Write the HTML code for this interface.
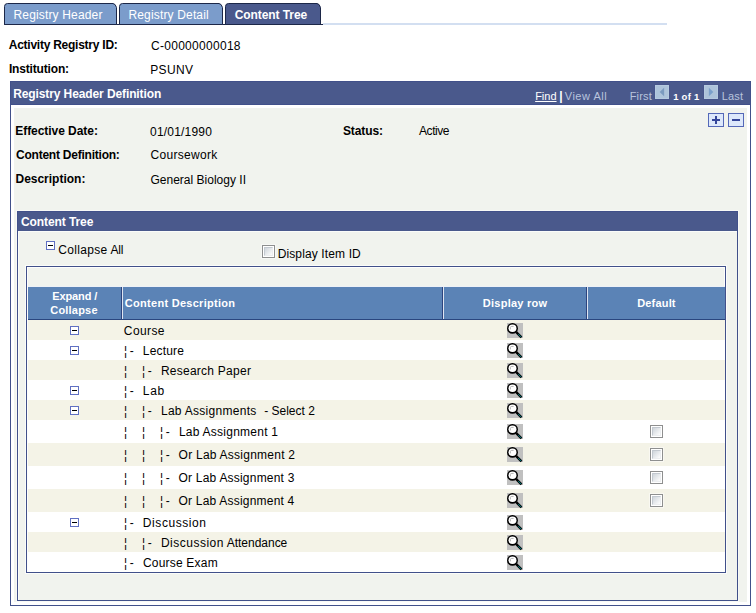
<!DOCTYPE html>
<html><head><meta charset="utf-8"><title>Content Tree</title>
<style>
html,body{margin:0;padding:0;background:#fff;}
body{width:756px;height:613px;position:relative;overflow:hidden;font-family:"Liberation Sans",sans-serif;font-size:12px;color:#000;}
.a{position:absolute;white-space:nowrap;}
.t{position:absolute;white-space:pre;line-height:14px;}
.b{font-weight:bold;}
.w{color:#fff;}
.s11{font-size:11px;line-height:13px;}
svg{position:absolute;display:block;overflow:visible;}
</style></head><body>
<div class="a" style="left:323px;top:23px;width:344px;height:2px;background:#d3dff1;"></div>
<div class="a" style="left:4px;top:24px;width:319px;height:1px;background:#1c2748;"></div>
<svg style="left:4px;top:3px" width="113" height="22" viewBox="0 0 113 22"><path d="M0.5 21.5 V3.5 Q0.5 0.5 3.5 0.5 H109 Q111.5 0.8 112.5 4.5 V21.5 Z" fill="#7b9ccb" stroke="#1c2748" stroke-width="1"/></svg>
<div class="t w" style="left:13.54px;top:8px;letter-spacing:0.154px;">Registry Header</div>
<svg style="left:119px;top:3px" width="104" height="22" viewBox="0 0 104 22"><path d="M0.5 21.5 V3.5 Q0.5 0.5 3.5 0.5 H100 Q102.5 0.8 103.5 4.5 V21.5 Z" fill="#7b9ccb" stroke="#1c2748" stroke-width="1"/></svg>
<div class="t w" style="left:128.44px;top:8px;letter-spacing:0.160px;">Registry Detail</div>
<svg style="left:225px;top:3px" width="96" height="22" viewBox="0 0 96 22"><path d="M0.5 21.5 V3.5 Q0.5 0.5 3.5 0.5 H92 Q94.5 0.8 95.5 4.5 V21.5 Z" fill="#4a598c" stroke="#1c2748" stroke-width="1"/></svg>
<div class="t b w" style="left:234.63px;top:8px;letter-spacing:-0.071px;">Content Tree</div>
<div class="t b" style="left:8.75px;top:38px;letter-spacing:-0.249px;">Activity Registry ID:</div>
<div class="t " style="left:150.97px;top:39px;letter-spacing:0.292px;">C-00000000018</div>
<div class="t b" style="left:8.88px;top:62px;letter-spacing:-0.163px;">Institution:</div>
<div class="t " style="left:150.24px;top:63px;letter-spacing:0.338px;">PSUNV</div>
<div class="a" style="left:10px;top:81px;width:741px;height:525px;background:#fff;box-sizing:border-box;border:1px solid #41508a;"></div>
<div class="a" style="left:14px;top:108px;width:733px;height:494px;background:#f1f3ee;"></div>
<div class="a" style="left:10px;top:81px;width:741px;height:24px;background:#4a598c;box-sizing:border-box;border:1px solid #41508a;"></div>
<div class="t b w" style="left:13.23px;top:87px;letter-spacing:-0.106px;">Registry Header Definition</div>
<div class="t w s11" style="left:535.15px;top:90px;letter-spacing:0.001px;"><span style="text-decoration:underline">Find</span></div>
<div class="t b w" style="left:559.25px;top:89px;">|</div>
<div class="t s11" style="left:564.72px;top:90px;letter-spacing:0.531px;color:#b9c4dd;">View All</div>
<div class="t s11" style="left:629.65px;top:90px;letter-spacing:0.182px;color:#b9c4dd;">First</div>
<div class="t b w" style="left:673.19px;top:91px;letter-spacing:0.242px;font-size:9.5px;line-height:11px;">1 of 1</div>
<div class="t s11" style="left:721.73px;top:90px;letter-spacing:0.157px;color:#b9c4dd;">Last</div>
<svg style="left:655px;top:85px" width="14" height="14" viewBox="0 0 14 14"><rect x="-0.5" y="-0.5" width="15" height="15" fill="none" stroke="#46548b" stroke-opacity="0.6" stroke-width="1"/><rect width="14" height="14" fill="#b5c9df"/><rect x="1" y="1" width="12" height="12" fill="#adc3da"/><path d="M9.1 2.8 L4.7 7 L9.1 11.2 Z" fill="#7b9abf"/></svg>
<svg style="left:704px;top:85px" width="14" height="14" viewBox="0 0 14 14"><rect x="-0.5" y="-0.5" width="15" height="15" fill="none" stroke="#46548b" stroke-opacity="0.6" stroke-width="1"/><rect width="14" height="14" fill="#b5c9df"/><rect x="1" y="1" width="12" height="12" fill="#adc3da"/><path d="M4.9 2.8 L9.3 7 L4.9 11.2 Z" fill="#7ba0cb"/></svg>
<svg style="left:708px;top:113px" width="16" height="14" viewBox="0 0 16 14"><rect x="0.5" y="0.5" width="15" height="13" fill="#dde8fb" stroke="#5468b8"/><path d="M4 7H12" stroke="#34459a" stroke-width="2"/><path d="M8 3V11" stroke="#34459a" stroke-width="2"/></svg>
<svg style="left:728px;top:113px" width="16" height="14" viewBox="0 0 16 14"><rect x="0.5" y="0.5" width="15" height="13" fill="#dde8fb" stroke="#5468b8"/><path d="M4 7H12" stroke="#34459a" stroke-width="2"/></svg>
<div class="t b" style="left:15.28px;top:124px;letter-spacing:-0.050px;">Effective Date:</div>
<div class="t " style="left:150.03px;top:125px;letter-spacing:0.202px;">01/01/1990</div>
<div class="t b" style="left:342.94px;top:124px;letter-spacing:-0.095px;">Status:</div>
<div class="t " style="left:419.04px;top:124px;letter-spacing:-0.433px;">Active</div>
<div class="t b" style="left:16.03px;top:148px;letter-spacing:-0.231px;">Content Definition:</div>
<div class="t " style="left:150.47px;top:148px;letter-spacing:0.299px;">Coursework</div>
<div class="t b" style="left:15.48px;top:172px;letter-spacing:-0.009px;">Description:</div>
<div class="t " style="left:150.47px;top:173px;letter-spacing:0.010px;">General Biology II</div>
<div class="a" style="left:16px;top:210px;width:723px;height:392px;background:transparent;box-sizing:border-box;border:1px solid #f8f9f6;"></div>
<div class="a" style="left:17px;top:211px;width:721px;height:390px;background:transparent;box-sizing:border-box;border:1px solid #41508a;"></div>
<div class="a" style="left:18px;top:212px;width:719px;height:388px;background:transparent;box-sizing:border-box;border-left:1px solid #fbfcfa;"></div>
<div class="a" style="left:18px;top:231px;width:719px;height:1px;background:#fbfcfa;"></div>
<div class="a" style="left:17px;top:211px;width:721px;height:20px;background:#4a598c;box-sizing:border-box;border:1px solid #41508a;border-bottom:none;"></div>
<div class="t b w" style="left:20.93px;top:215px;letter-spacing:-0.080px;">Content Tree</div>
<svg style="left:46px;top:241px" width="9" height="9" viewBox="0 0 9 9"><rect x="0.5" y="0.5" width="8" height="8" fill="#fff" stroke="#6070c2"/><path d="M2 4.5H7" stroke="#000"/></svg>
<div class="t " style="left:58.27px;top:243px;letter-spacing:0.315px;">Collapse</div>
<div class="t " style="left:110.44px;top:243px;letter-spacing:-0.181px;">All</div>
<div class="a" style="left:262px;top:245px;width:13px;height:13px;box-sizing:border-box;border:1px solid #8e8f8f;background:#fff;box-shadow:0 0 0 1px rgba(255,255,255,0.45);"><div style="position:absolute;left:1px;top:1px;width:9px;height:9px;box-sizing:border-box;border:1px solid;border-color:#c3c9d0 #eceef0 #eceef0 #c3c9d0;background:linear-gradient(135deg,#cfd5db 0%,#e6e9ec 50%,#fdfdfd 100%);"></div></div>
<div class="t " style="left:277.64px;top:247px;letter-spacing:0.127px;">Display Item ID</div>
<div class="a" style="left:25px;top:265px;width:702px;height:309px;background:transparent;box-sizing:border-box;border:1px solid #fbfcfa;"></div>
<div class="a" style="left:26px;top:266px;width:700px;height:307px;background:#f1f3ee;box-sizing:border-box;border:1px solid #41508a;"></div>
<div class="a" style="left:27px;top:267px;width:698px;height:305px;background:transparent;box-sizing:border-box;border:1px solid #fdfdfc;"></div>
<div class="a" style="left:28px;top:286px;width:697px;height:1px;background:#eef1f7;"></div>
<div class="a" style="left:28px;top:287px;width:697px;height:32px;background:#5b83b6;"></div>
<div class="a" style="left:28px;top:319px;width:697px;height:1px;background:#2a467f;"></div>
<div class="a" style="left:121px;top:287px;width:1px;height:32px;background:#2c447e;"></div>
<div class="a" style="left:122px;top:287px;width:1px;height:32px;background:#dfe5f1;"></div>
<div class="a" style="left:442px;top:287px;width:1px;height:32px;background:#2c447e;"></div>
<div class="a" style="left:443px;top:287px;width:1px;height:32px;background:#dfe5f1;"></div>
<div class="a" style="left:586px;top:287px;width:1px;height:32px;background:#2c447e;"></div>
<div class="a" style="left:587px;top:287px;width:1px;height:32px;background:#dfe5f1;"></div>
<div class="t b w s11" style="left:52.13px;top:289px;letter-spacing:-0.081px;line-height:14px;">Expand /</div>
<div class="t b w s11" style="left:50.25px;top:303px;letter-spacing:0.200px;line-height:14px;">Collapse</div>
<div class="t b w s11" style="left:124.85px;top:297px;letter-spacing:0.280px;">Content Description</div>
<div class="t b w s11" style="left:482.83px;top:297px;letter-spacing:0.240px;">Display row</div>
<div class="t b w s11" style="left:637.23px;top:297px;letter-spacing:0.169px;">Default</div>
<div class="a" style="left:28px;top:320px;width:697px;height:20px;background:#f4f3e7;"></div>
<svg style="left:70px;top:326px" width="9" height="9" viewBox="0 0 9 9"><rect x="0.5" y="0.5" width="8" height="8" fill="#fff" stroke="#6070c2"/><path d="M2 4.5H7" stroke="#000"/></svg>
<div class="t " style="left:123.87px;top:324px;letter-spacing:0.381px;">Course</div>
<svg style="left:507px;top:323px" width="16" height="15" viewBox="0 0 16 15"><rect width="16" height="15" fill="#c0c0c0"/><circle cx="5.5" cy="5.4" r="5.45" fill="#000"/><ellipse cx="5.5" cy="5.15" rx="3.95" ry="3.75" fill="#fff"/><path d="M3.4 6.4 V4.6 Q3.4 3.4 4.8 3.4 H6.6" fill="none" stroke="#b4b4b4" stroke-width="1"/><path d="M9.2 9.2 L14.5 14.3" stroke="#000" stroke-width="2.4"/><path d="M11.2 11.1 L14.3 14.1" stroke="#00868a" stroke-width="1.1" stroke-dasharray="0.9 0.6"/></svg>
<div class="a" style="left:28px;top:340px;width:697px;height:20px;background:#fff;"></div>
<svg style="left:70px;top:346px" width="9" height="9" viewBox="0 0 9 9"><rect x="0.5" y="0.5" width="8" height="8" fill="#fff" stroke="#6070c2"/><path d="M2 4.5H7" stroke="#000"/></svg>
<div class="t " style="left:124px;top:344px;">¦</div>
<div class="t " style="left:129.7px;top:344px;">-</div>
<div class="t " style="left:142.85px;top:344px;letter-spacing:0.171px;">Lecture</div>
<svg style="left:507px;top:343px" width="16" height="15" viewBox="0 0 16 15"><rect width="16" height="15" fill="#c0c0c0"/><circle cx="5.5" cy="5.4" r="5.45" fill="#000"/><ellipse cx="5.5" cy="5.15" rx="3.95" ry="3.75" fill="#fff"/><path d="M3.4 6.4 V4.6 Q3.4 3.4 4.8 3.4 H6.6" fill="none" stroke="#b4b4b4" stroke-width="1"/><path d="M9.2 9.2 L14.5 14.3" stroke="#000" stroke-width="2.4"/><path d="M11.2 11.1 L14.3 14.1" stroke="#00868a" stroke-width="1.1" stroke-dasharray="0.9 0.6"/></svg>
<div class="a" style="left:28px;top:360px;width:697px;height:20px;background:#f4f3e7;"></div>
<div class="t " style="left:124px;top:364px;">¦</div>
<div class="t " style="left:142px;top:364px;">¦</div>
<div class="t " style="left:147.7px;top:364px;">-</div>
<div class="t " style="left:160.95px;top:364px;letter-spacing:0.248px;">Research Paper</div>
<svg style="left:507px;top:363px" width="16" height="15" viewBox="0 0 16 15"><rect width="16" height="15" fill="#c0c0c0"/><circle cx="5.5" cy="5.4" r="5.45" fill="#000"/><ellipse cx="5.5" cy="5.15" rx="3.95" ry="3.75" fill="#fff"/><path d="M3.4 6.4 V4.6 Q3.4 3.4 4.8 3.4 H6.6" fill="none" stroke="#b4b4b4" stroke-width="1"/><path d="M9.2 9.2 L14.5 14.3" stroke="#000" stroke-width="2.4"/><path d="M11.2 11.1 L14.3 14.1" stroke="#00868a" stroke-width="1.1" stroke-dasharray="0.9 0.6"/></svg>
<div class="a" style="left:28px;top:380px;width:697px;height:20px;background:#fff;"></div>
<svg style="left:70px;top:386px" width="9" height="9" viewBox="0 0 9 9"><rect x="0.5" y="0.5" width="8" height="8" fill="#fff" stroke="#6070c2"/><path d="M2 4.5H7" stroke="#000"/></svg>
<div class="t " style="left:124px;top:384px;">¦</div>
<div class="t " style="left:129.7px;top:384px;">-</div>
<div class="t " style="left:142.85px;top:384px;letter-spacing:0.678px;">Lab</div>
<svg style="left:507px;top:383px" width="16" height="15" viewBox="0 0 16 15"><rect width="16" height="15" fill="#c0c0c0"/><circle cx="5.5" cy="5.4" r="5.45" fill="#000"/><ellipse cx="5.5" cy="5.15" rx="3.95" ry="3.75" fill="#fff"/><path d="M3.4 6.4 V4.6 Q3.4 3.4 4.8 3.4 H6.6" fill="none" stroke="#b4b4b4" stroke-width="1"/><path d="M9.2 9.2 L14.5 14.3" stroke="#000" stroke-width="2.4"/><path d="M11.2 11.1 L14.3 14.1" stroke="#00868a" stroke-width="1.1" stroke-dasharray="0.9 0.6"/></svg>
<div class="a" style="left:28px;top:400px;width:697px;height:20px;background:#f4f3e7;"></div>
<svg style="left:70px;top:406px" width="9" height="9" viewBox="0 0 9 9"><rect x="0.5" y="0.5" width="8" height="8" fill="#fff" stroke="#6070c2"/><path d="M2 4.5H7" stroke="#000"/></svg>
<div class="t " style="left:124px;top:404px;">¦</div>
<div class="t " style="left:142px;top:404px;">¦</div>
<div class="t " style="left:147.7px;top:404px;">-</div>
<div class="t " style="left:160.95px;top:404px;letter-spacing:0.283px;">Lab Assignments</div>
<div class="t " style="left:264.2px;top:404px;letter-spacing:0.002px;">- Select 2</div>
<svg style="left:507px;top:403px" width="16" height="15" viewBox="0 0 16 15"><rect width="16" height="15" fill="#c0c0c0"/><circle cx="5.5" cy="5.4" r="5.45" fill="#000"/><ellipse cx="5.5" cy="5.15" rx="3.95" ry="3.75" fill="#fff"/><path d="M3.4 6.4 V4.6 Q3.4 3.4 4.8 3.4 H6.6" fill="none" stroke="#b4b4b4" stroke-width="1"/><path d="M9.2 9.2 L14.5 14.3" stroke="#000" stroke-width="2.4"/><path d="M11.2 11.1 L14.3 14.1" stroke="#00868a" stroke-width="1.1" stroke-dasharray="0.9 0.6"/></svg>
<div class="a" style="left:28px;top:420px;width:697px;height:23px;background:#fff;"></div>
<div class="t " style="left:124px;top:425px;">¦</div>
<div class="t " style="left:142px;top:425px;">¦</div>
<div class="t " style="left:160px;top:425px;">¦</div>
<div class="t " style="left:165.7px;top:425px;">-</div>
<div class="t " style="left:178.95px;top:425px;letter-spacing:0.242px;">Lab Assignment 1</div>
<svg style="left:507px;top:424px" width="16" height="15" viewBox="0 0 16 15"><rect width="16" height="15" fill="#c0c0c0"/><circle cx="5.5" cy="5.4" r="5.45" fill="#000"/><ellipse cx="5.5" cy="5.15" rx="3.95" ry="3.75" fill="#fff"/><path d="M3.4 6.4 V4.6 Q3.4 3.4 4.8 3.4 H6.6" fill="none" stroke="#b4b4b4" stroke-width="1"/><path d="M9.2 9.2 L14.5 14.3" stroke="#000" stroke-width="2.4"/><path d="M11.2 11.1 L14.3 14.1" stroke="#00868a" stroke-width="1.1" stroke-dasharray="0.9 0.6"/></svg>
<div class="a" style="left:650px;top:425px;width:13px;height:13px;box-sizing:border-box;border:1px solid #8e8f8f;background:#fff;box-shadow:0 0 0 1px rgba(255,255,255,0.45);"><div style="position:absolute;left:1px;top:1px;width:9px;height:9px;box-sizing:border-box;border:1px solid;border-color:#c3c9d0 #eceef0 #eceef0 #c3c9d0;background:linear-gradient(135deg,#cfd5db 0%,#e6e9ec 50%,#fdfdfd 100%);"></div></div>
<div class="a" style="left:28px;top:443px;width:697px;height:23px;background:#f4f3e7;"></div>
<div class="t " style="left:124px;top:448px;">¦</div>
<div class="t " style="left:142px;top:448px;">¦</div>
<div class="t " style="left:160px;top:448px;">¦</div>
<div class="t " style="left:165.7px;top:448px;">-</div>
<div class="t " style="left:178.58px;top:448px;letter-spacing:0.241px;">Or Lab Assignment 2</div>
<svg style="left:507px;top:447px" width="16" height="15" viewBox="0 0 16 15"><rect width="16" height="15" fill="#c0c0c0"/><circle cx="5.5" cy="5.4" r="5.45" fill="#000"/><ellipse cx="5.5" cy="5.15" rx="3.95" ry="3.75" fill="#fff"/><path d="M3.4 6.4 V4.6 Q3.4 3.4 4.8 3.4 H6.6" fill="none" stroke="#b4b4b4" stroke-width="1"/><path d="M9.2 9.2 L14.5 14.3" stroke="#000" stroke-width="2.4"/><path d="M11.2 11.1 L14.3 14.1" stroke="#00868a" stroke-width="1.1" stroke-dasharray="0.9 0.6"/></svg>
<div class="a" style="left:650px;top:448px;width:13px;height:13px;box-sizing:border-box;border:1px solid #8e8f8f;background:#fff;box-shadow:0 0 0 1px rgba(255,255,255,0.45);"><div style="position:absolute;left:1px;top:1px;width:9px;height:9px;box-sizing:border-box;border:1px solid;border-color:#c3c9d0 #eceef0 #eceef0 #c3c9d0;background:linear-gradient(135deg,#cfd5db 0%,#e6e9ec 50%,#fdfdfd 100%);"></div></div>
<div class="a" style="left:28px;top:466px;width:697px;height:23px;background:#fff;"></div>
<div class="t " style="left:124px;top:471px;">¦</div>
<div class="t " style="left:142px;top:471px;">¦</div>
<div class="t " style="left:160px;top:471px;">¦</div>
<div class="t " style="left:165.7px;top:471px;">-</div>
<div class="t " style="left:178.58px;top:471px;letter-spacing:0.206px;">Or Lab Assignment 3</div>
<svg style="left:507px;top:470px" width="16" height="15" viewBox="0 0 16 15"><rect width="16" height="15" fill="#c0c0c0"/><circle cx="5.5" cy="5.4" r="5.45" fill="#000"/><ellipse cx="5.5" cy="5.15" rx="3.95" ry="3.75" fill="#fff"/><path d="M3.4 6.4 V4.6 Q3.4 3.4 4.8 3.4 H6.6" fill="none" stroke="#b4b4b4" stroke-width="1"/><path d="M9.2 9.2 L14.5 14.3" stroke="#000" stroke-width="2.4"/><path d="M11.2 11.1 L14.3 14.1" stroke="#00868a" stroke-width="1.1" stroke-dasharray="0.9 0.6"/></svg>
<div class="a" style="left:650px;top:471px;width:13px;height:13px;box-sizing:border-box;border:1px solid #8e8f8f;background:#fff;box-shadow:0 0 0 1px rgba(255,255,255,0.45);"><div style="position:absolute;left:1px;top:1px;width:9px;height:9px;box-sizing:border-box;border:1px solid;border-color:#c3c9d0 #eceef0 #eceef0 #c3c9d0;background:linear-gradient(135deg,#cfd5db 0%,#e6e9ec 50%,#fdfdfd 100%);"></div></div>
<div class="a" style="left:28px;top:489px;width:697px;height:23px;background:#f4f3e7;"></div>
<div class="t " style="left:124px;top:494px;">¦</div>
<div class="t " style="left:142px;top:494px;">¦</div>
<div class="t " style="left:160px;top:494px;">¦</div>
<div class="t " style="left:165.7px;top:494px;">-</div>
<div class="t " style="left:178.58px;top:494px;letter-spacing:0.201px;">Or Lab Assignment 4</div>
<svg style="left:507px;top:493px" width="16" height="15" viewBox="0 0 16 15"><rect width="16" height="15" fill="#c0c0c0"/><circle cx="5.5" cy="5.4" r="5.45" fill="#000"/><ellipse cx="5.5" cy="5.15" rx="3.95" ry="3.75" fill="#fff"/><path d="M3.4 6.4 V4.6 Q3.4 3.4 4.8 3.4 H6.6" fill="none" stroke="#b4b4b4" stroke-width="1"/><path d="M9.2 9.2 L14.5 14.3" stroke="#000" stroke-width="2.4"/><path d="M11.2 11.1 L14.3 14.1" stroke="#00868a" stroke-width="1.1" stroke-dasharray="0.9 0.6"/></svg>
<div class="a" style="left:650px;top:494px;width:13px;height:13px;box-sizing:border-box;border:1px solid #8e8f8f;background:#fff;box-shadow:0 0 0 1px rgba(255,255,255,0.45);"><div style="position:absolute;left:1px;top:1px;width:9px;height:9px;box-sizing:border-box;border:1px solid;border-color:#c3c9d0 #eceef0 #eceef0 #c3c9d0;background:linear-gradient(135deg,#cfd5db 0%,#e6e9ec 50%,#fdfdfd 100%);"></div></div>
<div class="a" style="left:28px;top:512px;width:697px;height:20px;background:#fff;"></div>
<svg style="left:70px;top:518px" width="9" height="9" viewBox="0 0 9 9"><rect x="0.5" y="0.5" width="8" height="8" fill="#fff" stroke="#6070c2"/><path d="M2 4.5H7" stroke="#000"/></svg>
<div class="t " style="left:124px;top:516px;">¦</div>
<div class="t " style="left:129.7px;top:516px;">-</div>
<div class="t " style="left:142.85px;top:516px;letter-spacing:0.569px;">Discussion</div>
<svg style="left:507px;top:515px" width="16" height="15" viewBox="0 0 16 15"><rect width="16" height="15" fill="#c0c0c0"/><circle cx="5.5" cy="5.4" r="5.45" fill="#000"/><ellipse cx="5.5" cy="5.15" rx="3.95" ry="3.75" fill="#fff"/><path d="M3.4 6.4 V4.6 Q3.4 3.4 4.8 3.4 H6.6" fill="none" stroke="#b4b4b4" stroke-width="1"/><path d="M9.2 9.2 L14.5 14.3" stroke="#000" stroke-width="2.4"/><path d="M11.2 11.1 L14.3 14.1" stroke="#00868a" stroke-width="1.1" stroke-dasharray="0.9 0.6"/></svg>
<div class="a" style="left:28px;top:532px;width:697px;height:20px;background:#f4f3e7;"></div>
<div class="t " style="left:124px;top:536px;">¦</div>
<div class="t " style="left:142px;top:536px;">¦</div>
<div class="t " style="left:147.7px;top:536px;">-</div>
<div class="t " style="left:160.95px;top:536px;letter-spacing:0.491px;">Discussion</div>
<div class="t " style="left:226.74px;top:536px;letter-spacing:-0.018px;">Attendance</div>
<svg style="left:507px;top:535px" width="16" height="15" viewBox="0 0 16 15"><rect width="16" height="15" fill="#c0c0c0"/><circle cx="5.5" cy="5.4" r="5.45" fill="#000"/><ellipse cx="5.5" cy="5.15" rx="3.95" ry="3.75" fill="#fff"/><path d="M3.4 6.4 V4.6 Q3.4 3.4 4.8 3.4 H6.6" fill="none" stroke="#b4b4b4" stroke-width="1"/><path d="M9.2 9.2 L14.5 14.3" stroke="#000" stroke-width="2.4"/><path d="M11.2 11.1 L14.3 14.1" stroke="#00868a" stroke-width="1.1" stroke-dasharray="0.9 0.6"/></svg>
<div class="a" style="left:28px;top:552px;width:697px;height:20px;background:#fff;"></div>
<div class="t " style="left:124px;top:556px;">¦</div>
<div class="t " style="left:129.7px;top:556px;">-</div>
<div class="t " style="left:142.97px;top:556px;letter-spacing:0.197px;">Course Exam</div>
<svg style="left:507px;top:555px" width="16" height="15" viewBox="0 0 16 15"><rect width="16" height="15" fill="#c0c0c0"/><circle cx="5.5" cy="5.4" r="5.45" fill="#000"/><ellipse cx="5.5" cy="5.15" rx="3.95" ry="3.75" fill="#fff"/><path d="M3.4 6.4 V4.6 Q3.4 3.4 4.8 3.4 H6.6" fill="none" stroke="#b4b4b4" stroke-width="1"/><path d="M9.2 9.2 L14.5 14.3" stroke="#000" stroke-width="2.4"/><path d="M11.2 11.1 L14.3 14.1" stroke="#00868a" stroke-width="1.1" stroke-dasharray="0.9 0.6"/></svg>
</body></html>
